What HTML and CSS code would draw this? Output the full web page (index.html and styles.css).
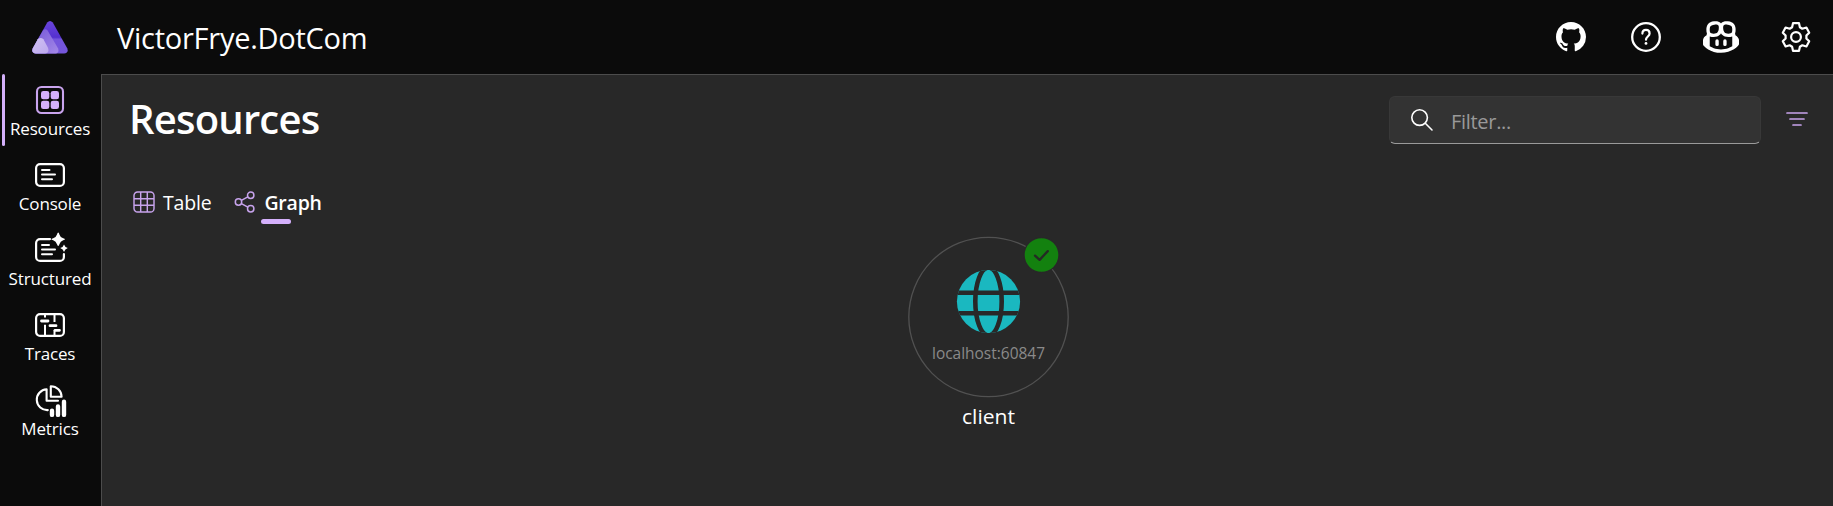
FILE: index.html
```html
<!DOCTYPE html>
<html lang="en">
<head>
<meta charset="utf-8">
<title>VictorFrye.DotCom resources</title>
<link rel="stylesheet" href="styles.css">
</head>
<body>
<div class="app">
  <header class="header">
    <div class="logo">
      <svg width="36" height="33" viewBox="0 0 36 33">
        <defs>
          <linearGradient id="g1" x1="0" y1="0" x2="0" y2="1"><stop offset="0" stop-color="#6a45dc"/><stop offset=".5" stop-color="#5430cf"/><stop offset=".56" stop-color="#7455dd"/><stop offset="1" stop-color="#7556da"/></linearGradient>
          <linearGradient id="g2" x1="0" y1="0" x2="1" y2="1"><stop offset="0" stop-color="#7558d8"/><stop offset="1" stop-color="#a488e8"/></linearGradient>
          <linearGradient id="g3" x1="0" y1="0" x2="1" y2="1"><stop offset="0" stop-color="#d0c2f2"/><stop offset="1" stop-color="#bda8ee"/></linearGradient>
        </defs>
        <path d="M15.2 1.6Q18 -1.4 20.8 1.6L35.2 27.2Q37 32 32 32.5H4Q-1 32 .8 27.2Z" fill="url(#g1)"/>
        <path d="M11 9.4Q13.3 7.2 15.6 9.4L26 27.2Q27.6 32 23.5 32.5H4Q-1 32 .8 27.2Z" fill="url(#g2)"/>
        <path d="M5.8 18.2Q8.7 15.7 11.4 18.2L16 26.8Q17.6 32 13 32.5H4Q-1 32 .8 27.2Z" fill="url(#g3)"/>
      </svg>
    </div>
    <div class="app-name">VictorFrye.DotCom</div>
    <nav class="header-actions">
      <svg class="action" viewBox="0 0 16 16" width="30" height="30" fill="#fff"><path d="M8 0C3.58 0 0 3.58 0 8c0 3.54 2.29 6.53 5.47 7.59.4.07.55-.17.55-.38 0-.19-.01-.82-.01-1.49-2.01.37-2.53-.49-2.69-.94-.09-.23-.48-.94-.82-1.13-.28-.15-.68-.52-.01-.53.63-.01 1.08.58 1.23.82.72 1.21 1.87.87 2.33.66.07-.52.28-.87.51-1.07-1.78-.2-3.64-.89-3.64-3.95 0-.87.31-1.59.82-2.15-.08-.2-.36-1.02.08-2.12 0 0 .67-.21 2.2.82.64-.18 1.32-.27 2-.27s1.36.09 2 .27c1.53-1.04 2.2-.82 2.2-.82.44 1.1.16 1.92.08 2.12.51.56.82 1.27.82 2.15 0 3.07-1.87 3.75-3.65 3.95.29.25.54.73.54 1.48 0 1.07-.01 1.93-.01 2.2 0 .21.15.46.55.38A8.01 8.01 0 0 0 16 8c0-4.42-3.58-8-8-8z"/></svg>
      <svg class="action" viewBox="0 0 30 30" width="30" height="30" fill="none" stroke="#fff"><circle cx="15" cy="15" r="13.8" stroke-width="2.3"/><path d="M11.4 11.6c0-2.2 1.5-3.7 3.6-3.7s3.6 1.5 3.6 3.5c0 2.9-3.6 3.3-3.6 6.3" stroke-width="2.2" stroke-linecap="round"/><circle cx="15" cy="21.4" r="1.4" fill="#fff" stroke="none"/></svg>
      <svg class="action" viewBox="0 0 16 16" width="36" height="36" fill="#fff"><path fill-rule="evenodd" d="M7.998 15.035c-4.562 0-7.873-2.914-7.998-3.749V9.338c.085-.628.677-1.686 1.588-2.065.013-.07.024-.143.036-.218.029-.183.06-.384.126-.612-.201-.508-.254-1.084-.254-1.656 0-.87.128-1.769.693-2.484.579-.733 1.494-1.124 2.724-1.261 1.206-.134 2.262.034 2.944.765.05.053.096.108.139.165.044-.057.094-.112.143-.165.682-.731 1.738-.899 2.944-.765 1.23.137 2.145.528 2.724 1.261.566.715.693 1.614.693 2.484 0 .572-.053 1.148-.254 1.656.066.228.098.429.126.612.012.076.024.148.037.218.924.385 1.522 1.471 1.591 2.095v1.872c0 .766-3.351 3.795-8.002 3.795Zm0-1.485c2.28 0 4.584-1.11 5.002-1.433V7.862l-.023-.116c-.49.21-1.075.291-1.727.291-1.146 0-2.059-.327-2.71-.991A3.222 3.222 0 0 1 8 6.303a3.24 3.24 0 0 1-.544.743c-.65.664-1.563.991-2.71.991-.652 0-1.236-.081-1.727-.291l-.023.116v4.255c.419.323 2.722 1.433 5.002 1.433ZM6.762 2.83c-.193-.206-.637-.413-1.682-.297-1.019.113-1.479.404-1.713.7-.247.312-.369.789-.369 1.554 0 .793.129 1.171.308 1.371.162.181.519.379 1.442.379.853 0 1.339-.235 1.638-.54.315-.322.527-.827.617-1.553.117-.935-.037-1.395-.241-1.614Zm4.155-.297c-1.044-.116-1.488.091-1.681.297-.204.219-.359.679-.242 1.614.091.726.303 1.231.618 1.553.299.305.784.54 1.638.54.922 0 1.28-.198 1.442-.379.179-.2.308-.578.308-1.371 0-.765-.123-1.242-.37-1.554-.233-.296-.693-.587-1.713-.7Z"/><path d="M6.25 9.037a.75.75 0 0 1 .75.75v1.501a.75.75 0 0 1-1.5 0V9.787a.75.75 0 0 1 .75-.75Zm4.25.75v1.501a.75.75 0 0 1-1.5 0V9.787a.75.75 0 0 1 1.5 0Z"/></svg>
      <svg class="action" viewBox="-15 -15 30 30" width="30" height="30" fill="none" stroke="#fff" stroke-width="2.2" stroke-linejoin="round"><path d="M-3 -13.8L3 -13.8L3.9 -9.8L6.3 -8.3L10.4 -9.5L13.2 -4.3L10.4 -1.4V1.4L13.2 4.3L10.4 9.5L6.3 8.3L3.9 9.8L3 13.8H-3L-3.9 9.8L-6.3 8.3L-10.4 9.5L-13.2 4.3L-10.4 1.4V-1.4L-13.2 -4.3L-10.4 -9.5L-6.3 -8.3L-3.9 -9.8Z"/><circle r="4.9"/></svg>
    </nav>
  </header>

  <aside class="rail">
    <a class="rail-item active">
      <svg width="36" height="36" viewBox="0 0 36 36"><rect x="5" y="5" width="26" height="26" rx="4.5" fill="none" stroke="#c9a4ee" stroke-width="2.1"/><g fill="#d4b0fb"><rect x="9" y="9" width="8.3" height="8.3" rx="2.3"/><rect x="18.7" y="9" width="8.3" height="8.3" rx="2.3"/><rect x="9" y="18.7" width="8.3" height="8.3" rx="2.3"/><rect x="18.7" y="18.7" width="8.3" height="8.3" rx="2.3"/></g></svg>
      <span>Resources</span>
    </a>
    <a class="rail-item">
      <svg width="36" height="36" viewBox="0 0 36 36" fill="none" stroke="#fff" stroke-width="2.2" stroke-linecap="round"><rect x="4.1" y="7.1" width="27.8" height="21.8" rx="4"/><path d="M10 13h7.5M10 17.6h13M10 22.2h10" stroke-width="2"/></svg>
      <span>Console</span>
    </a>
    <a class="rail-item">
      <svg width="36" height="36" viewBox="0 0 36 36" fill="none" stroke="#fff" stroke-width="2.2" stroke-linecap="round"><path d="M18 7.1H8.1a4 4 0 0 0-4 4v13.8a4 4 0 0 0 4 4h19.8a4 4 0 0 0 4-4v-2.7"/><path d="M10 13h7M10 17.6h13M10 22.2h10" stroke-width="2"/><g fill="#fff" stroke="none"><path d="M26.2 0.6Q27 .6 27.4 2.4Q28.3 5.4 31.2 6.3Q33 6.8 33 7.3Q33 7.8 31.2 8.3Q28.3 9.2 27.4 12.2Q27 14 26.2 14Q25.5 14 25 12.2Q24 9.2 21.2 8.3Q19.4 7.8 19.4 7.3Q19.4 6.8 21.2 6.3Q24 5.4 25 2.4Q25.5 .6 26.2 .6Z"/><path d="M32 12.4Q32.9 15.2 35.8 16.1Q32.9 17 32 20Q31.2 17 28.2 16.1Q31.2 15.2 32 12.4Z"/></g></svg>
      <span>Structured</span>
    </a>
    <a class="rail-item">
      <svg width="36" height="36" viewBox="0 0 36 36" fill="none" stroke="#fff" stroke-width="2.2"><rect x="4.1" y="7.1" width="27.8" height="21.8" rx="4"/><path d="M13 7v3.5M13 17.8V29M22.5 7v8M22.5 23v6" stroke-width="2"/><path d="M9.5 14H16M18 18.7h6M23 23.3h4.5" stroke-width="2.8" stroke-linecap="round"/></svg>
      <span>Traces</span>
    </a>
    <a class="rail-item metrics">
      <svg width="36" height="36" viewBox="0 0 36 36" fill="none" stroke="#fff" stroke-width="2.1" stroke-linecap="round" stroke-linejoin="round"><path d="M18.8 3.2V13.8H29.6A10.7 10.7 0 0 0 18.8 3.2Z"/><path d="M14.6 6.3A10.4 10.4 0 1 0 15.8 27.1M14.6 6.3V17.8H26"/><path d="M20 27.8v4.1M26 23.4v8.5M32 18.8v13.1" stroke-width="4.4"/></svg>
      <span>Metrics</span>
    </a>
  </aside>

  <main class="content">
    <div class="page-head">
      <h1>Resources</h1>
      <div class="tools">
        <div class="search">
          <svg width="24" height="24" viewBox="0 0 24 24" fill="none" stroke="#fff" stroke-width="1.6" stroke-linecap="round"><circle cx="9.6" cy="9.6" r="7.8"/><path d="M15.3 15.3L22 22"/></svg>
          <span>Filter...</span>
        </div>
        <svg class="filter-icon" width="24" height="24" viewBox="0 0 24 24" fill="none" stroke="#c7a3ec" stroke-width="1.7" stroke-linecap="round"><path d="M2 6H22M5 12H19M8 18H16"/></svg>
      </div>
    </div>
    <div class="tabs">
      <div class="tab">
        <svg width="22" height="22" viewBox="0 0 22 22" fill="none" stroke="#c7a3ec" stroke-width="1.45"><rect x="1" y="1" width="20" height="20" rx="3.6"/><path d="M7.7 1v20M14.3 1v20M1 7.7h20M1 14.3h20"/></svg>
        <span>Table</span>
      </div>
      <div class="tab selected">
        <svg width="22" height="22" viewBox="0 0 22 22" fill="none" stroke="#c7a3ec" stroke-width="1.5"><circle cx="4.5" cy="11" r="3.2"/><circle cx="16.7" cy="4.2" r="3.2"/><circle cx="16.7" cy="17.8" r="3.2"/><path d="M7.4 9.4l6.4-3.6M7.4 12.6l6.4 3.6"/></svg>
        <span>Graph</span>
      </div>
    </div>
    <div class="graph">
      <svg width="180" height="200" viewBox="898 232 180 200">
        <circle cx="988.5" cy="317" r="79.7" fill="none" stroke="#515151" stroke-width="1.3"/>
        <clipPath id="disc"><circle cx="988.5" cy="301.5" r="31.6"/></clipPath>
        <g clip-path="url(#disc)">
          <rect x="956" y="269" width="65" height="65" fill="#1ab8c0"/>
          <g fill="none" stroke="#282828" stroke-width="4.6"><ellipse cx="988.5" cy="301.5" rx="13.2" ry="34"/><path d="M956 292.8h65M956 313.3h65"/></g>
        </g>
        <circle cx="1041.5" cy="255" r="18" fill="#282828"/>
        <circle cx="1041.5" cy="255" r="16.8" fill="#13810f"/>
        <path d="M1035 255.6l4.6 4.3l8.2-8.8" fill="none" stroke="#242a24" stroke-width="2.3" stroke-linecap="round" stroke-linejoin="round"/>
        <text class="endpoint" x="932" y="359" textLength="113" lengthAdjust="spacingAndGlyphs">localhost:60847</text>
        <text class="node-name" x="962" y="423.5" textLength="53" lengthAdjust="spacingAndGlyphs">client</text>
      </svg>
    </div>
  </main>
</div>
</body>
</html>
```
FILE: styles.css
```css
* { box-sizing: border-box; }
body {
  margin: 0;
  background: #0b0b0b;
  color: #fff;
  font-family: "Open Sans", "Noto Sans", sans-serif;
}
.app {
  display: grid;
  grid-template: 74px 432px / 101px 1fr;
  width: 1833px;
  height: 506px;
  overflow: hidden;
}
.header {
  grid-column: 1 / 3;
  display: flex;
  align-items: center;
}
.logo { width: 100px; display: flex; justify-content: center; }
.app-name {
  margin-left: 17px;
  padding-top: 2px;
  font-size: 29px;
  line-height: 40px;
  letter-spacing: -0.26px;
  white-space: nowrap;
}
.header-actions {
  margin-left: auto;
  display: grid;
  grid-template-columns: repeat(4, 75px);
  justify-items: center;
}
.action { align-self: center; }
.rail { display: flex; flex-direction: column; width: 100px; }
.rail-item {
  flex: none;
  height: 75px;
  padding-top: 8px;
  display: flex;
  flex-direction: column;
  align-items: center;
  position: relative;
  font-size: 17px;
  line-height: 24px;
  letter-spacing: -0.15px;
  white-space: nowrap;
}
.rail-item svg { flex: none; }
.rail-item span { margin-top: -1px; }
.metrics { padding-top: 9px; }
.metrics span { margin-top: -2px; }
.rail-item.active::before {
  content: "";
  position: absolute;
  left: 2px;
  top: 0;
  width: 3px;
  height: 72px;
  border-radius: 2px;
  background: #d4b0fb;
}
.content {
  background: #282828;
  border-top: 1px solid #4c4c4c;
  border-left: 1px solid #4c4c4c;
}
.page-head {
  display: flex;
  justify-content: space-between;
  padding: 21px 24px 0 27px;
  height: 107px;
}
h1 {
  margin: -1px 0 0;
  font-size: 40px;
  line-height: 48px;
  font-weight: 600;
  letter-spacing: -0.8px;
}
.tools { display: flex; gap: 24px; }
.search {
  width: 372px;
  height: 48px;
  padding-left: 20px;
  display: flex;
  align-items: center;
  gap: 17px;
  background: #333;
  border: 1px solid #383838;
  border-bottom: 1px solid #9a9a9a;
  border-radius: 6px;
  font-size: 20px;
  color: #999;
}
.search span { padding-top: 2px; letter-spacing: -0.3px; }
.filter-icon { margin-top: 11px; }
.tabs {
  display: flex;
  gap: 23px;
  padding-left: 31px;
  height: 43px;
}
.tab {
  height: 43px;
  padding-top: 6px;
  display: flex;
  align-items: flex-start;
  gap: 8px;
  position: relative;
  font-size: 19.5px;
  line-height: 30px;
  letter-spacing: -0.2px;
  white-space: nowrap;
}
.tab svg { margin-top: 3px; }
.selected { font-weight: 600; }
.selected::after {
  content: "";
  position: absolute;
  left: 27px;
  top: 37px;
  width: 30px;
  height: 5px;
  border-radius: 3px;
  background: #d4b0fb;
}
.graph { padding: 7px 0 0 796px; }
.graph svg { display: block; }
.endpoint { font-size: 17px; fill: #8a8a8a; }
.node-name { font-size: 20.5px; fill: #fff; }
```
